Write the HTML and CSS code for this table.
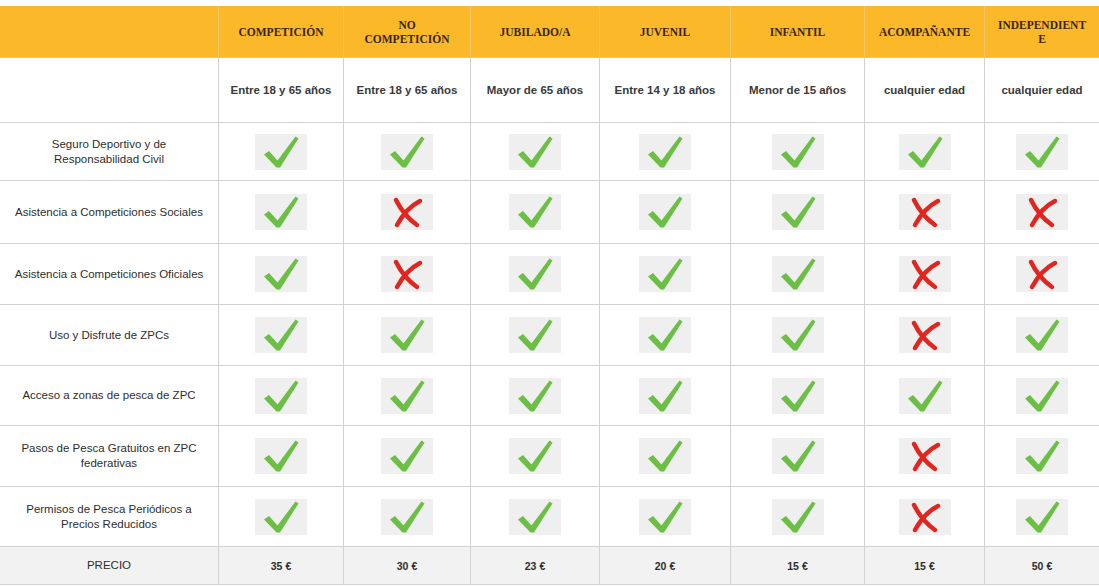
FILE: index.html
```html
<!DOCTYPE html>
<html lang="es">
<head>
<meta charset="utf-8">
<link rel="stylesheet" href="styles.css">
</head>
<body>
<svg width="0" height="0" class="defs">
  <defs>
    <symbol id="ok" viewBox="0 0 52 36">
      <rect width="52" height="36" fill="#efefef"/>
      <path d="M9 20.5 L14 17 L22.5 26.5 L40.5 2.5 L43.5 4.5 L25 33.5 L21.5 33.5 Z" fill="#6bbf45"/>
    </symbol>
    <symbol id="no" viewBox="0 0 52 36">
      <rect width="52" height="36" fill="#efefef"/>
      <path d="M15 6 C19 14 26 24 36 31" stroke="#e1261f" stroke-width="4.5" fill="none" stroke-linecap="round"/>
      <path d="M39 7 C31 11 22 20 16 31" stroke="#e1261f" stroke-width="4.5" fill="none" stroke-linecap="round"/>
    </symbol>
  </defs>
</svg>
<table class="grid">
  <colgroup>
    <col class="c0"><col class="c1"><col class="c2"><col class="c3"><col class="c4"><col class="c5"><col class="c6"><col class="c7">
  </colgroup>
  <thead>
    <tr class="head">
      <th></th>
      <th>COMPETICIÓN</th>
      <th>NO<br>COMPETICIÓN</th>
      <th>JUBILADO/A</th>
      <th>JUVENIL</th>
      <th>INFANTIL</th>
      <th>ACOMPAÑANTE</th>
      <th>INDEPENDIENT<br>E</th>
    </tr>
  </thead>
  <tbody>
    <tr class="ages">
      <td></td>
      <td>Entre 18 y 65 años</td>
      <td>Entre 18 y 65 años</td>
      <td>Mayor de 65 años</td>
      <td>Entre 14 y 18 años</td>
      <td>Menor de 15 años</td>
      <td>cualquier edad</td>
      <td>cualquier edad</td>
    </tr>
    <tr class="r1">
      <td class="label">Seguro Deportivo y de<br>Responsabilidad Civil</td>
      <td><svg class="ic"><use href="#ok"/></svg></td>
      <td><svg class="ic"><use href="#ok"/></svg></td>
      <td><svg class="ic"><use href="#ok"/></svg></td>
      <td><svg class="ic"><use href="#ok"/></svg></td>
      <td><svg class="ic"><use href="#ok"/></svg></td>
      <td><svg class="ic"><use href="#ok"/></svg></td>
      <td><svg class="ic"><use href="#ok"/></svg></td>
    </tr>
    <tr class="r2">
      <td class="label">Asistencia a Competiciones Sociales</td>
      <td><svg class="ic"><use href="#ok"/></svg></td>
      <td><svg class="ic"><use href="#no"/></svg></td>
      <td><svg class="ic"><use href="#ok"/></svg></td>
      <td><svg class="ic"><use href="#ok"/></svg></td>
      <td><svg class="ic"><use href="#ok"/></svg></td>
      <td><svg class="ic"><use href="#no"/></svg></td>
      <td><svg class="ic"><use href="#no"/></svg></td>
    </tr>
    <tr class="r3">
      <td class="label">Asistencia a Competiciones Oficiales</td>
      <td><svg class="ic"><use href="#ok"/></svg></td>
      <td><svg class="ic"><use href="#no"/></svg></td>
      <td><svg class="ic"><use href="#ok"/></svg></td>
      <td><svg class="ic"><use href="#ok"/></svg></td>
      <td><svg class="ic"><use href="#ok"/></svg></td>
      <td><svg class="ic"><use href="#no"/></svg></td>
      <td><svg class="ic"><use href="#no"/></svg></td>
    </tr>
    <tr class="r4">
      <td class="label">Uso y Disfrute de ZPCs</td>
      <td><svg class="ic"><use href="#ok"/></svg></td>
      <td><svg class="ic"><use href="#ok"/></svg></td>
      <td><svg class="ic"><use href="#ok"/></svg></td>
      <td><svg class="ic"><use href="#ok"/></svg></td>
      <td><svg class="ic"><use href="#ok"/></svg></td>
      <td><svg class="ic"><use href="#no"/></svg></td>
      <td><svg class="ic"><use href="#ok"/></svg></td>
    </tr>
    <tr class="r5">
      <td class="label">Acceso a zonas de pesca de ZPC</td>
      <td><svg class="ic"><use href="#ok"/></svg></td>
      <td><svg class="ic"><use href="#ok"/></svg></td>
      <td><svg class="ic"><use href="#ok"/></svg></td>
      <td><svg class="ic"><use href="#ok"/></svg></td>
      <td><svg class="ic"><use href="#ok"/></svg></td>
      <td><svg class="ic"><use href="#ok"/></svg></td>
      <td><svg class="ic"><use href="#ok"/></svg></td>
    </tr>
    <tr class="r6">
      <td class="label">Pasos de Pesca Gratuitos en ZPC<br>federativas</td>
      <td><svg class="ic"><use href="#ok"/></svg></td>
      <td><svg class="ic"><use href="#ok"/></svg></td>
      <td><svg class="ic"><use href="#ok"/></svg></td>
      <td><svg class="ic"><use href="#ok"/></svg></td>
      <td><svg class="ic"><use href="#ok"/></svg></td>
      <td><svg class="ic"><use href="#no"/></svg></td>
      <td><svg class="ic"><use href="#ok"/></svg></td>
    </tr>
    <tr class="r7">
      <td class="label">Permisos de Pesca Periódicos a<br>Precios Reducidos</td>
      <td><svg class="ic"><use href="#ok"/></svg></td>
      <td><svg class="ic"><use href="#ok"/></svg></td>
      <td><svg class="ic"><use href="#ok"/></svg></td>
      <td><svg class="ic"><use href="#ok"/></svg></td>
      <td><svg class="ic"><use href="#ok"/></svg></td>
      <td><svg class="ic"><use href="#no"/></svg></td>
      <td><svg class="ic"><use href="#ok"/></svg></td>
    </tr>
    <tr class="price">
      <td class="label">PRECIO</td>
      <td>35 €</td>
      <td>30 €</td>
      <td>23 €</td>
      <td>20 €</td>
      <td>15 €</td>
      <td>15 €</td>
      <td>50 €</td>
    </tr>
  </tbody>
</table>
</body>
</html>
```
FILE: styles.css
```css
html, body {
  margin: 0;
  padding: 0;
  background: #ffffff;
}
body {
  padding-top: 6px;
  font-family: "Liberation Sans", Arial, sans-serif;
  color: #2b2b2b;
}
.defs {
  position: absolute;
  width: 0;
  height: 0;
}
.grid {
  border-collapse: collapse;
  table-layout: fixed;
  width: 1100px;
  margin-left: -1px;
}
.c0 { width: 219px; }
.c1 { width: 125px; }
.c2 { width: 127px; }
.c3 { width: 129px; }
.c4 { width: 131px; }
.c5 { width: 134px; }
.c6 { width: 120px; }
.c7 { width: 115px; }
.grid th,
.grid td {
  border: 1px solid #d2d2d2;
  text-align: center;
  vertical-align: middle;
  padding: 0;
}
.head th {
  background: #fbb829;
  border-color: #f1c66a;
  border-top: none;
  height: 51px;
  font-family: "Liberation Serif", "Times New Roman", serif;
  font-weight: bold;
  font-size: 11.5px;
  line-height: 14px;
  color: #3a2612;
}
.head th:first-child {
  border-left: none;
}
.ages td {
  height: 64px;
  font-size: 11.5px;
  font-weight: bold;
  color: #3a3a3a;
}
.label {
  font-size: 11.5px;
  line-height: 15px;
  color: #2e2e2e;
  font-weight: normal;
}
.r1 td { height: 57px; }
.r2 td { height: 62px; }
.r3 td { height: 60px; }
.r4 td { height: 60px; }
.r5 td { height: 59px; }
.r6 td { height: 60px; }
.r7 td { height: 59px; }
.ic {
  display: block;
  width: 52px;
  height: 36px;
  margin: 0 auto;
}
.price td {
  background: #f2f2f2;
  height: 37px;
  font-size: 10.5px;
  font-weight: bold;
  color: #2e2e2e;
}
.price td.label {
  font-size: 11.5px;
  font-weight: normal;
}
```
